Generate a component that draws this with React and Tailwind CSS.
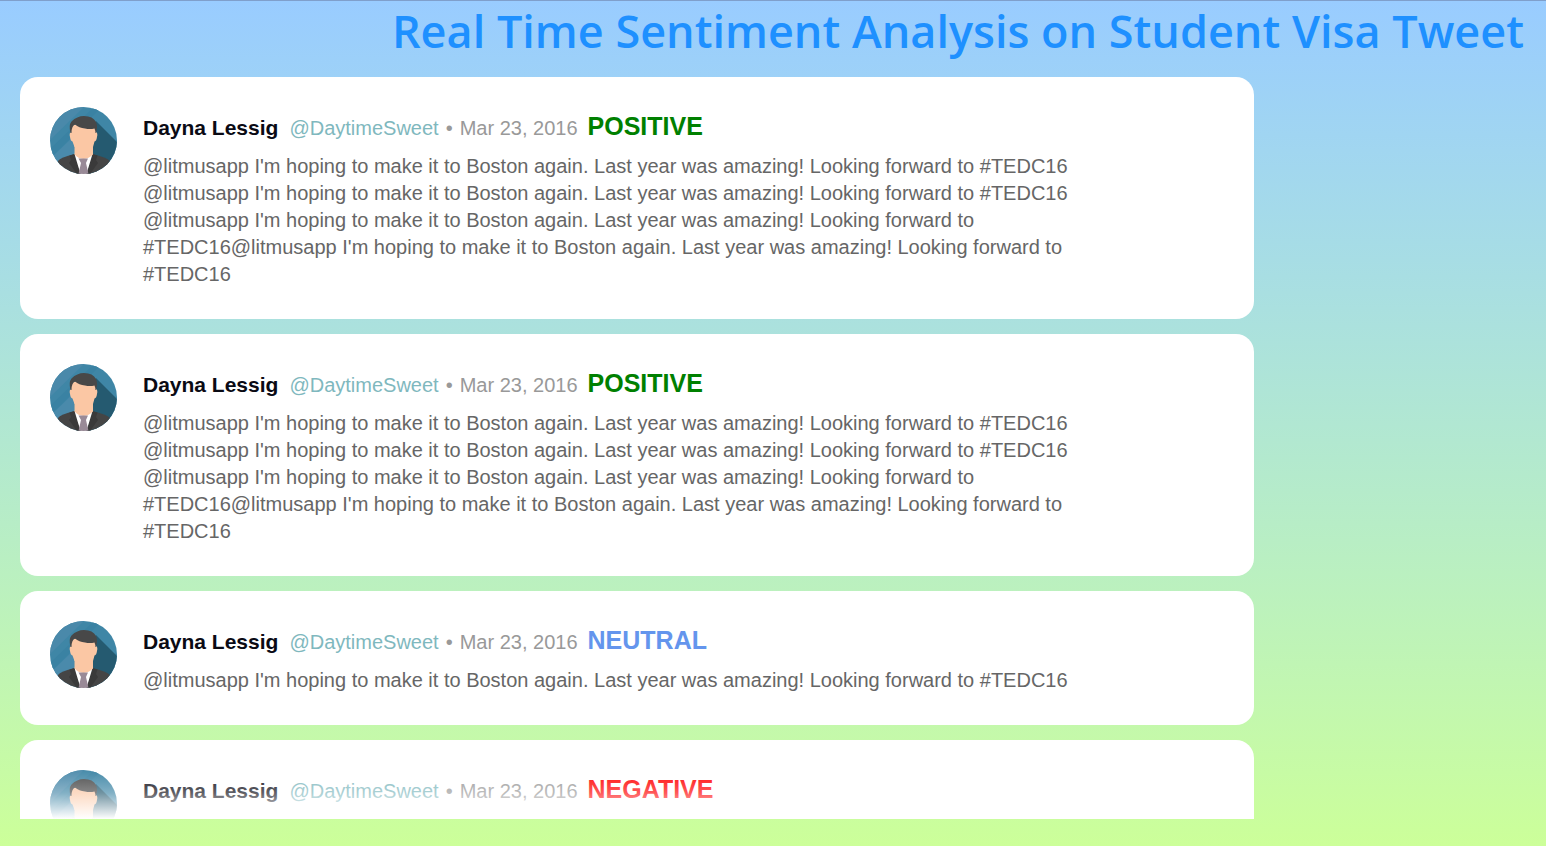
const LINE =
  "@litmusapp I'm hoping to make it to Boston again. Last year was amazing! Looking forward to #TEDC16";
const LONG = `${LINE} ${LINE} ${LINE}${LINE}`;

const TWEETS = [
  { id: 1, sentiment: 'POSITIVE', text: LONG },
  { id: 2, sentiment: 'POSITIVE', text: LONG },
  { id: 3, sentiment: 'NEUTRAL', text: LINE },
  { id: 4, sentiment: 'NEGATIVE' },
];

const SENTIMENT_COLOR = {
  POSITIVE: 'text-[#008000]',
  NEUTRAL: 'text-[#6495ed]',
  NEGATIVE: 'text-[#ff0000]',
};

function Avatar({ id }) {
  const clip = `avatar-clip-${id}`;
  return (
    <svg viewBox="0 0 67 67" className="size-[67px] shrink-0" aria-hidden="true">
      <defs>
        <clipPath id={clip}>
          <circle cx="33.5" cy="33.5" r="33.5" />
        </clipPath>
      </defs>
      <g clipPath={`url(#${clip})`}>
        <rect width="67" height="67" fill="#3f86a6" />
        <path d="M0 0H34L0 33Z" fill="#4a89aa" />
        <path d="M0 42L44 0H52L0 52Z" fill="#3a82a3" />
        <path d="M0 52L24 29V50L10 60Z" fill="#4a8aab" />
        <path d="M46 14L67 35V67H40V28Z" fill="#255a70" />
        <path d="M5 67L8 54Q10 50.500 25 47H42Q57 50.500 60 54L64 67Z" fill="#454545" />
        <path d="M25 46L34 50L42 46L43 50L36.500 67H30.500L24 50Z" fill="#fff" />
        <path d="M19.500 48.500L24.500 47L30.500 67H27L19 56L21 53Z" fill="#3a3a3a" />
        <path d="M47.500 48.500L42.500 47L36.500 67H40L48 56L46 53Z" fill="#3a3a3a" />
        <path d="M24.500 34H43V47.500Q39 51.500 33.500 52Q28 51.500 24.500 47.500Z" fill="#fbc7a4" />
        <path d="M21 19Q33 14 46 19V25Q48 26 47 30Q46.500 34 44.500 34.500L43 40H24.500L22.500 34.500Q20.500 34 20 30Q19 26 21 25Z" fill="#fbc7a4" />
        <path d="M20.500 26Q18.500 18 21.500 14.500Q27 9 34 9Q43 9 46 15Q48 19 46 26H45.500Q45.500 24 44.500 21.500Q40 22.500 35 21.500Q29 21 25 17.500Q21.500 19 21.500 26Z" fill="#484848" />
        <path d="M28.500 51.500H38L36 56L38.500 67H28.500L31 56Z" fill="#998a97" />
      </g>
    </svg>
  );
}

function Tweet({ id, sentiment, text }) {
  return (
    <li className="flex shrink-0 gap-[26px] rounded-[18px] bg-white px-[30px] pt-[30px] pb-[31px]">
      <Avatar id={id} />
      <article className="min-w-0 max-w-[950px] pt-1.5">
        <header className="flex items-baseline whitespace-nowrap text-xl leading-[27px] text-[#999]">
          <strong className="mr-[11px] text-[21px] font-bold text-[#0a0a14]">Dayna Lessig</strong>
          <a href="#daytimesweet" className="text-[#7fb8be]">@DaytimeSweet</a>
          <span className="mx-[7px]">•</span>
          <time dateTime="2016-03-23">Mar 23, 2016</time>
          <strong className={`ml-2.5 text-[25px] font-bold ${SENTIMENT_COLOR[sentiment]}`}>{sentiment}</strong>
        </header>
        {text && <p className="mt-[11px] text-xl leading-[27px] text-[#666]">{text}</p>}
      </article>
    </li>
  );
}

export default function App() {
  return (
    <div className="flex h-screen flex-col overflow-hidden border-t border-[#7f9fcb] bg-linear-to-b from-[#99ccff] to-[#ccff99] pb-[27px] font-['Liberation_Sans',Arial,sans-serif]">
      <h1 className="shrink-0 pr-[22px] pb-4 text-right font-['Open_Sans','Noto_Sans',sans-serif] text-[45px] leading-[60px] font-semibold whitespace-nowrap text-[#1e90ff]">
        Real Time Sentiment Analysis on Student Visa Tweet
      </h1>
      <main className="relative ml-5 min-h-0 w-full max-w-[1234px] flex-1 overflow-hidden">
        <ul className="flex flex-col gap-[15px]">
          {TWEETS.map((t) => (
            <Tweet key={t.id} {...t} />
          ))}
        </ul>
        <div className="pointer-events-none absolute inset-x-0 bottom-0 h-[52px] bg-linear-to-b from-white/0 via-white/35 to-white" />
      </main>
    </div>
  );
}
